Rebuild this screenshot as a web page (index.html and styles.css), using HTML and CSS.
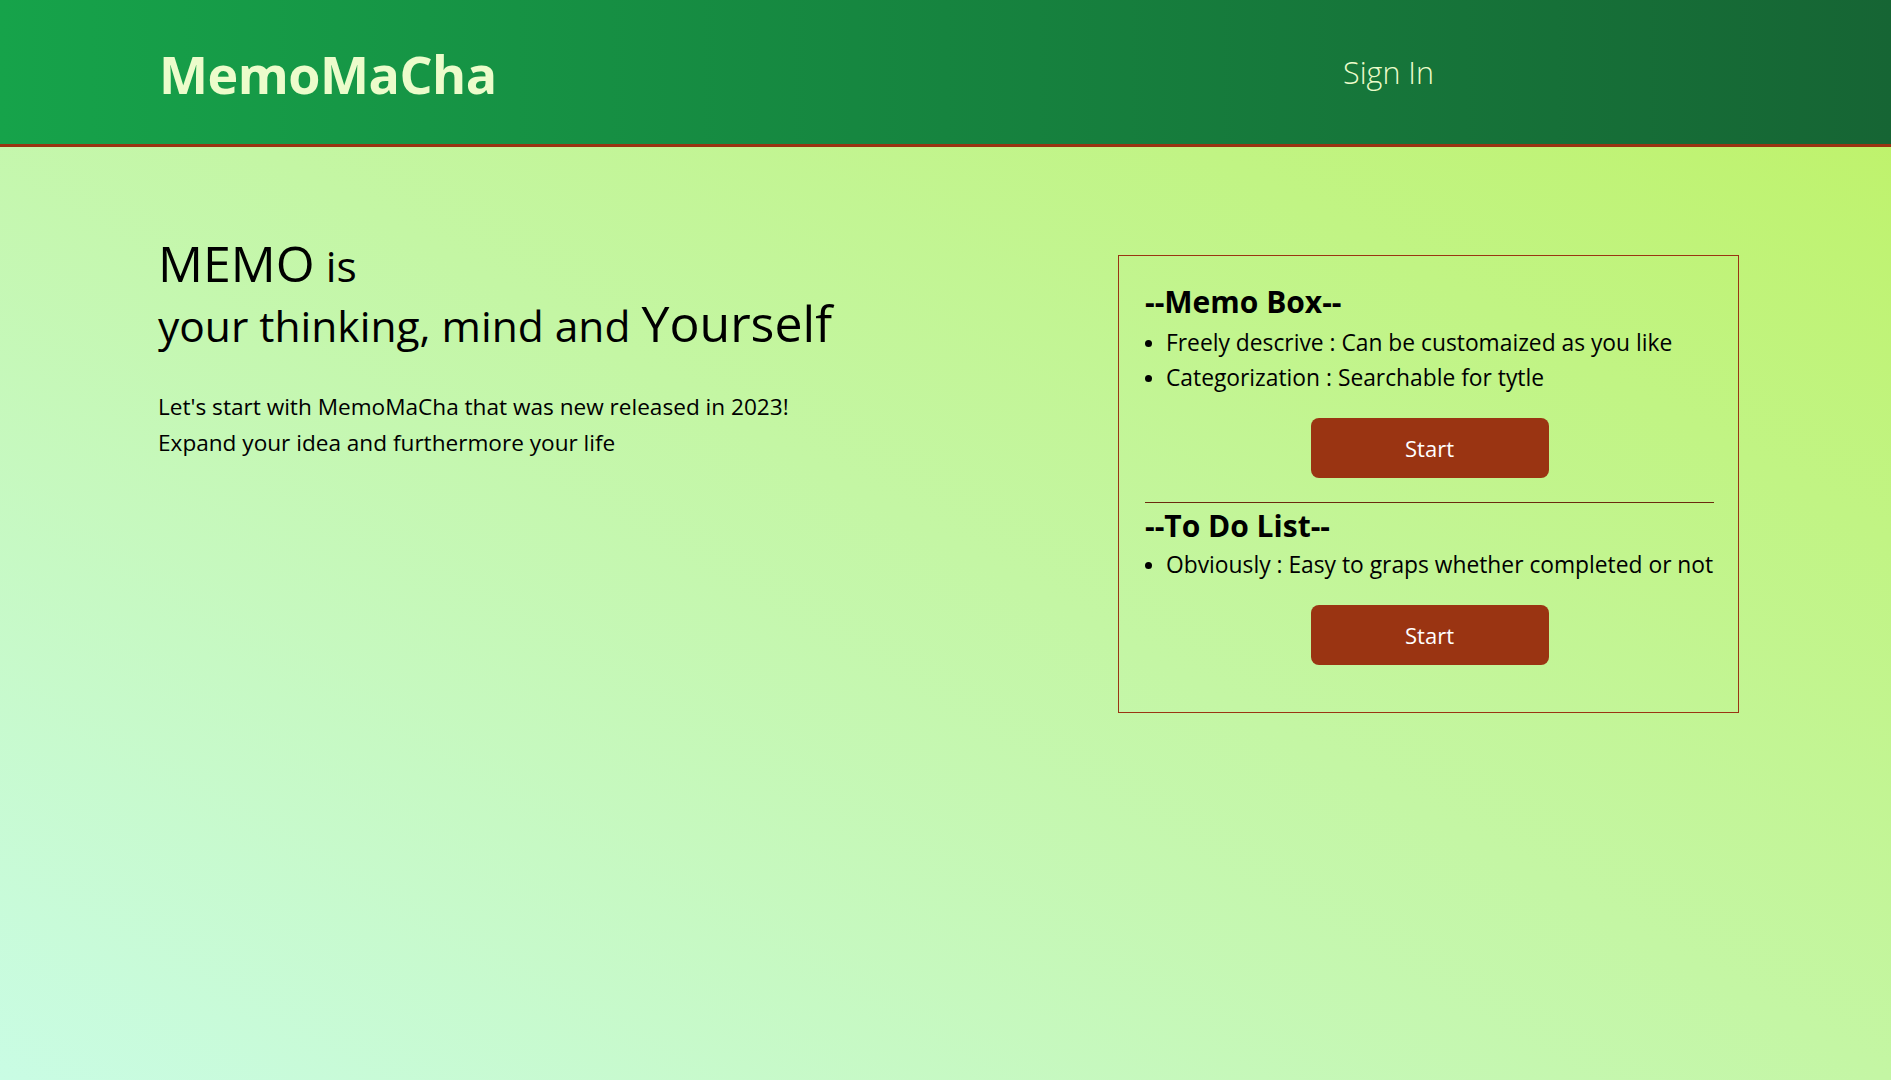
FILE: index.html
```html
<!DOCTYPE html>
<html lang="en">
<head>
<meta charset="utf-8">
<title>MemoMaCha</title>
<link rel="stylesheet" href="styles.css">
</head>
<body>
<header class="site-header">
  <div class="header-inner">
    <a class="logo" href="#">MemoMaCha</a>
    <a class="signin" href="#">Sign In</a>
  </div>
</header>
<main class="main">
  <section class="hero">
    <h1 class="hero-title">
      <span class="line"><span class="big">MEMO</span> is</span>
      <span class="line">your thinking, mind and <span class="big">Yourself</span></span>
    </h1>
    <p class="hero-text">Let's start with MemoMaCha that was new released in 2023!</p>
    <p class="hero-text">Expand your idea and furthermore your life</p>
  </section>
  <aside class="card">
    <section class="feature">
      <h2 class="feature-title">--Memo Box--</h2>
      <ul class="feature-list">
        <li>Freely descrive : Can be customaized as you like</li>
        <li>Categorization : Searchable for tytle</li>
      </ul>
      <div class="btn-row"><button class="btn">Start</button></div>
    </section>
    <hr class="divider">
    <section class="feature feature-todo">
      <h2 class="feature-title">--To Do List--</h2>
      <ul class="feature-list">
        <li>Obviously : Easy to graps whether completed or not</li>
      </ul>
      <div class="btn-row"><button class="btn">Start</button></div>
    </section>
  </aside>
</main>
</body>
</html>
```
FILE: styles.css
```css
* { box-sizing: border-box; }
html, body { margin: 0; padding: 0; }
body {
  min-height: 100vh;
  font-family: "Open Sans", "Noto Sans", sans-serif;
  color: #000;
  background: linear-gradient(to top right, #c9fce4 0%, #c4f6a4 50%, #bef264 100%);
}
.site-header {
  height: 147px;
  border-bottom: 3px solid #9a3412;
  background: linear-gradient(to right, #16a34a, #166534);
}
.header-inner {
  height: 144px;
  width: 1434px;
  padding-left: 159px;
  display: flex;
  align-items: center;
  justify-content: space-between;
}
.logo {
  color: #ecfccb;
  text-decoration: none;
  font-weight: 700;
  font-size: 52px;
  letter-spacing: -0.5px;
  line-height: 1;
  margin-top: 4px;
}
.signin {
  color: #ecfccb;
  text-decoration: none;
  font-weight: 300;
  font-size: 30.5px;
  line-height: 1;
}
.main {
  display: flex;
  justify-content: space-between;
  align-items: flex-start;
  padding: 89px 152px 0 158px;
}
.hero-title {
  margin: 0;
  font-weight: 400;
  font-size: 42.5px;
  line-height: 60px;
}
.hero-title .line { display: block; }
.hero-title .big { font-size: 50px; line-height: 1; }
.hero-text {
  margin: 0;
  font-size: 22.6px;
  line-height: 36px;
}
.hero-title + .hero-text { margin-top: 33px; }
.card {
  margin-top: 19px;
  width: 621px;
  border: 1px solid #9a3412;
  padding: 28px 24px 47px 26px;
}
.feature-title {
  margin: 0;
  font-size: 30px;
  font-weight: 700;
  line-height: 36px;
}
.feature-list {
  margin: 5px 0 0;
  padding-left: 21px;
  font-size: 22.8px;
  line-height: 35px;
}
.feature-todo .feature-list { margin-top: 3px; }
.feature-list li::marker { font-size: 20px; }
.btn-row {
  display: flex;
  justify-content: center;
  margin-top: 23px;
}
.btn {
  width: 238px;
  height: 60px;
  border: none;
  border-radius: 8px;
  background: #9a3412;
  color: #fff;
  font-family: inherit;
  font-size: 22px;
}
.divider {
  margin: 24px 0 5px;
  border: none;
  border-top: 1px solid #6b2a0e;
  height: 0;
}
```
